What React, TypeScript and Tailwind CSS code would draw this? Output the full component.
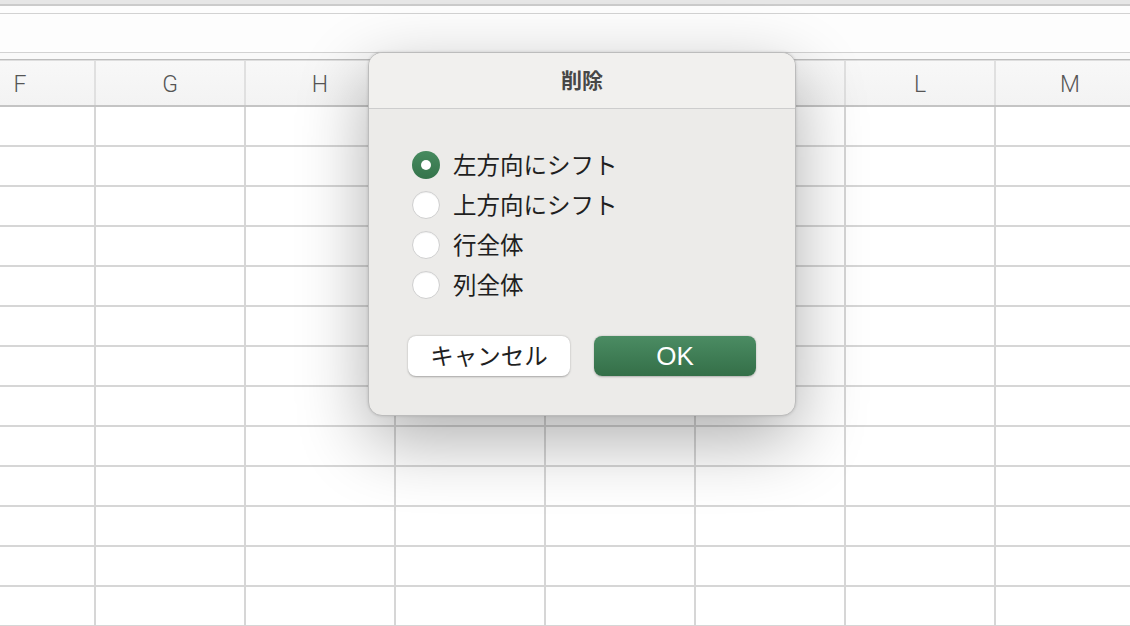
import { useState } from 'react';

const columns = ['F', 'G', 'H', 'I', 'J', 'K', 'L', 'M'];
const rows = Array.from({ length: 13 });

const options = ['左方向にシフト', '上方向にシフト', '行全体', '列全体'];

const jp = { fontFamily: '"Noto Sans CJK JP", "Noto Sans", sans-serif' };

function Sheet() {
  return (
    <div className="flex flex-col h-[626px] overflow-hidden bg-white">
      {/* toolbar remnants + formula bar */}
      <div className="h-[4px] bg-[#e6e6e6] shrink-0" />
      <div className="h-[2px] bg-[#cbcbcb] shrink-0" />
      <div className="h-[7px] bg-[#fdfdfd] shrink-0" />
      <div className="h-[1px] bg-[#d2d2d2] shrink-0" />
      <div className="h-[38px] bg-[#fdfdfd] shrink-0" />
      <div className="h-[1px] bg-[#d2d2d2] shrink-0" />
      <div className="h-[6px] bg-[#f9f9f9] shrink-0" />
      <div className="h-[1px] bg-[#bdbdbd] shrink-0" />
      <div className="h-[1px] bg-[#dedede] shrink-0" />

      {/* column header */}
      <div className="flex h-[46px] ml-[-54px] bg-gradient-to-b from-[#f8f8f8] to-[#f3f3f3] border-b-2 border-[#c4c4c4] shrink-0">
        {columns.map((c) => (
          <div
            key={c}
            className="w-[150px] shrink-0 border-r-2 border-[#e0e0e0] flex items-center justify-center pt-[4px] text-[23px] font-light text-[#555]"
            style={{ fontFamily: 'Roboto, "Liberation Sans", sans-serif' }}
          >
            {c}
          </div>
        ))}
      </div>

      {/* cells */}
      {rows.map((_, r) => (
        <div key={r} className="flex h-[40px] ml-[-54px] border-b-2 border-[#d6d6d6] shrink-0">
          {columns.map((c) => (
            <div key={c} className="w-[150px] h-full shrink-0 border-r-2 border-[#d6d6d6]" />
          ))}
        </div>
      ))}
    </div>
  );
}

function Radio({ checked }: { checked: boolean }) {
  if (checked) {
    return (
      <span className="w-[28px] h-[28px] rounded-full bg-gradient-to-b from-[#468a5f] to-[#35744b] flex items-center justify-center shrink-0">
        <span className="w-[10px] h-[10px] rounded-full bg-white" />
      </span>
    );
  }
  return (
    <span className="w-[28px] h-[28px] rounded-full bg-white border border-[#cfcfcf] shadow-[inset_0_1px_1px_rgba(0,0,0,0.06)] shrink-0" />
  );
}

function DeleteDialog() {
  const [selected, setSelected] = useState(0);

  return (
    <div className="absolute left-[368px] top-[52px] w-[428px] h-[364px] rounded-[14px] border border-[#bcbcbc] bg-[#ecebe9] shadow-[0_24px_70px_rgba(0,0,0,0.32),0_0_3px_rgba(0,0,0,0.15)] flex flex-col overflow-hidden">
      <div className="h-[56px] bg-[#f1f0ee] border-b border-[#cdcdcd] flex items-center justify-center shrink-0">
        <span className="text-[21px] font-bold text-[#474747] mt-[-2px]" style={jp}>
          削除
        </span>
      </div>

      <div className="flex flex-col pt-[36px] pl-[43px]">
        {options.map((label, i) => (
          <button
            key={label}
            onClick={() => setSelected(i)}
            className="h-[40px] flex items-center gap-[13px] text-left"
          >
            <Radio checked={selected === i} />
            <span className="text-[23.5px] text-[#1f1f1f] leading-none" style={jp}>
              {label}
            </span>
          </button>
        ))}
      </div>

      <div className="flex gap-[24px] px-[39px] mt-[31px]">
        <button
          className="w-[162px] h-[40px] rounded-[8px] bg-white shadow-[0_0.5px_2px_rgba(0,0,0,0.3)] text-[23.5px] text-[#1f1f1f]"
          style={jp}
        >
          キャンセル
        </button>
        <button
          className="w-[162px] h-[40px] rounded-[8px] bg-gradient-to-b from-[#4b8c63] to-[#346f48] shadow-[0_0.5px_2px_rgba(0,0,0,0.25)] text-[26px] text-white"
          style={{ fontFamily: '"Liberation Sans", Arial, sans-serif' }}
        >
          OK
        </button>
      </div>
    </div>
  );
}

export default function App() {
  return (
    <div className="relative w-[1130px] h-[626px] overflow-hidden">
      <Sheet />
      <DeleteDialog />
    </div>
  );
}
